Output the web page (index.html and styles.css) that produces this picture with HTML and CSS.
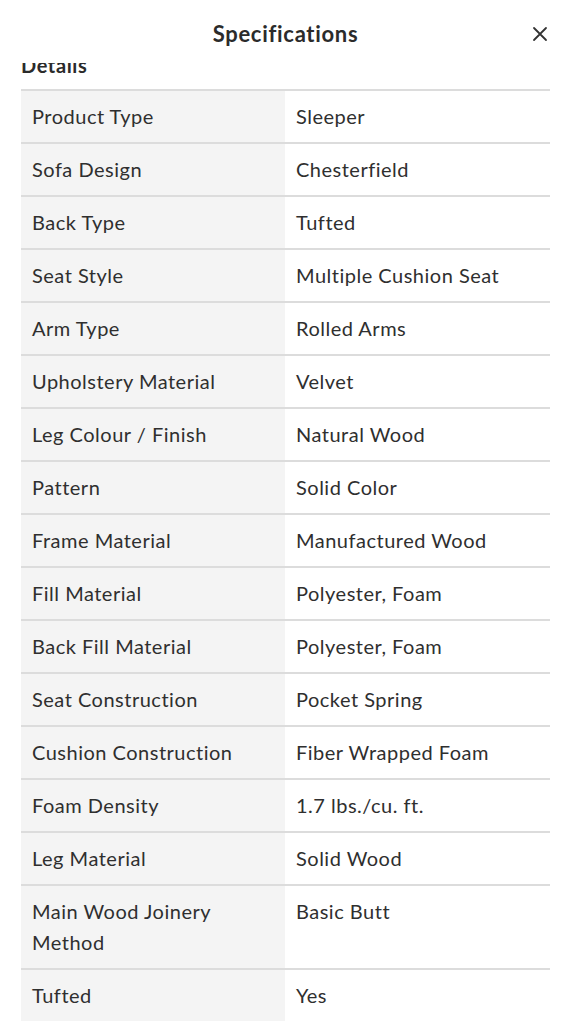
FILE: index.html
```html
<!DOCTYPE html>
<html>
<head>
<meta charset="utf-8">
<link rel="stylesheet" href="styles.css">
</head>
<body>
<div class="modal">
  <header class="modal-header">
    <h1 class="title">Specifications</h1>
    <button class="close" aria-label="Close">
      <svg width="16" height="16" viewBox="0 0 16 16"><path d="M2 2 L14 14 M14 2 L2 14" stroke="#333" stroke-width="1.8" stroke-linecap="round" fill="none"/></svg>
    </button>
  </header>
  <div class="modal-body">
    <div class="scroll">
      <h2 class="section-title">Details</h2>
      <table class="specs">
        <tr><th>Product Type</th><td>Sleeper</td></tr>
        <tr><th>Sofa Design</th><td>Chesterfield</td></tr>
        <tr><th>Back Type</th><td>Tufted</td></tr>
        <tr><th>Seat Style</th><td>Multiple Cushion Seat</td></tr>
        <tr><th>Arm Type</th><td>Rolled Arms</td></tr>
        <tr><th>Upholstery Material</th><td>Velvet</td></tr>
        <tr><th>Leg Colour / Finish</th><td>Natural Wood</td></tr>
        <tr><th>Pattern</th><td>Solid Color</td></tr>
        <tr><th>Frame Material</th><td>Manufactured Wood</td></tr>
        <tr><th>Fill Material</th><td>Polyester, Foam</td></tr>
        <tr><th>Back Fill Material</th><td>Polyester, Foam</td></tr>
        <tr><th>Seat Construction</th><td>Pocket Spring</td></tr>
        <tr><th>Cushion Construction</th><td>Fiber Wrapped Foam</td></tr>
        <tr><th>Foam Density</th><td>1.7 lbs./cu. ft.</td></tr>
        <tr><th>Leg Material</th><td>Solid Wood</td></tr>
        <tr><th>Main Wood Joinery<br>Method</th><td>Basic Butt</td></tr>
        <tr><th>Tufted</th><td>Yes</td></tr>
      </table>
    </div>
  </div>
</div>
</body>
</html>
```

FILE: styles.css
```css
html, body {
  margin: 0;
  padding: 0;
  background: #fff;
}
body {
  font-family: "Lato", "Open Sans", sans-serif;
  color: #2f2f2f;
  height: 1024px;
  overflow: hidden;
}
.modal {
  background: #fff;
  height: 1024px;
  display: flex;
  flex-direction: column;
  border-radius: 10px 10px 0 0;
}
.modal-header {
  height: 63px;
  flex: none;
  display: flex;
  align-items: center;
  justify-content: center;
  position: relative;
  background: #fff;
  z-index: 1;
}
.title {
  margin: 0;
  font-size: 22px;
  font-weight: 700;
  letter-spacing: 0.7px;
  color: #2b2b2b;
  padding-top: 3px;
}
.close {
  position: absolute;
  right: 23px;
  top: 26px;
  border: 0;
  background: none;
  padding: 0;
  width: 16px;
  height: 16px;
  display: flex;
}
.modal-body {
  flex: 1;
  overflow: hidden;
  padding: 0 21px;
}
.scroll {
  margin-top: -10px;
}
.section-title {
  margin: 0 0 12px 0;
  font-size: 20px;
  font-weight: 700;
  letter-spacing: 0.6px;
  line-height: 24px;
  color: #2b2b2b;
}
.specs {
  width: 100%;
  border-collapse: collapse;
  font-size: 20px;
  letter-spacing: 0.5px;
  line-height: 31px;
}
.specs tr {
  border-top: 2px solid #dcdcdc;
}
.specs th, .specs td {
  text-align: left;
  vertical-align: top;
  padding: 10px 11px;
  font-weight: 400;
}
.specs th {
  width: 242px;
  background: #f4f4f4;
}
.specs td {
  background: #fff;
}
```
